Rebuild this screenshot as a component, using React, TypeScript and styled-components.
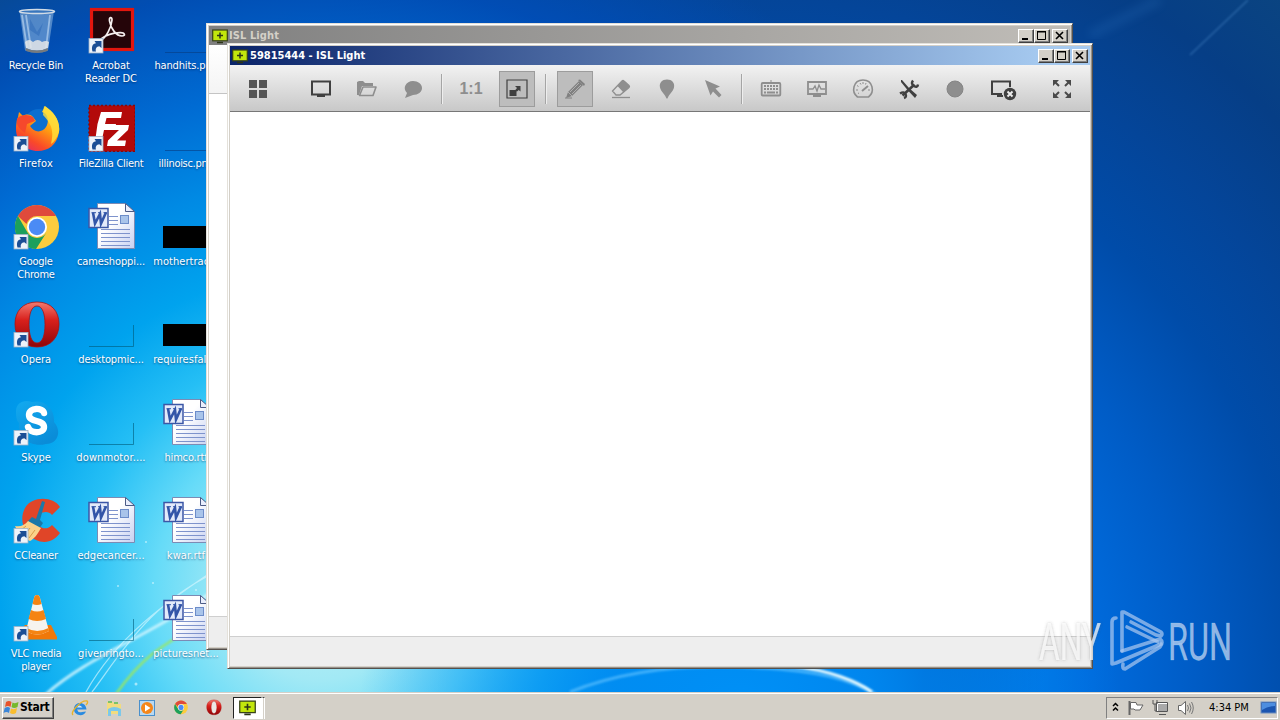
import React from 'react';
import styled, { createGlobalStyle, css } from 'styled-components';

const Global = createGlobalStyle`
  * { box-sizing: border-box; }
  body { margin: 0; overflow: hidden; }
`;

const Screen = styled.div`
  width: 1280px;
  height: 720px;
  display: flex;
  flex-direction: column;
  overflow: hidden;
  font-family: 'DejaVu Sans Condensed', 'DejaVu Sans', sans-serif;
  font-size: 11px;
  line-height: 13px;
`;

const Desktop = styled.main`
  position: relative;
  flex: 1;
  overflow: hidden;
  background:
    radial-gradient(ellipse 380px 240px at 740px 700px, #0090f6 0, rgba(0, 138, 242, 0.9) 35%, rgba(0, 120, 232, 0) 100%),
    radial-gradient(circle at 320px 590px, #c4f2f6 0, #a2e9f5 90px, #66dbf8 165px, #25bff5 240px, #00a3ee 320px, #008ae4 410px, #006bd3 500px, rgba(0, 78, 184, 0.9) 610px, rgba(0, 74, 175, 0) 730px),
    radial-gradient(ellipse 600px 640px at 750px 690px, #0098f8 0, #0088f0 25%, #006cde 56%, #005cc6 74%, #004ca9 92%, #044599 108%, #063e86 125%, #0c467f 145%);
`;

const Streaks = styled.svg`
  position: absolute;
  inset: 0;
`;

const IconGrid = styled.div`
  position: relative;
  display: grid;
  grid-auto-flow: column;
  grid-template-rows: repeat(7, 98px);
  grid-auto-columns: 72px;
  column-gap: 3px;
  width: 222px;
`;

const Shortcut = styled.div`
  display: flex;
  flex-direction: column;
  align-items: center;
  padding-top: 6px;
  gap: 5px;
`;

const Label = styled.span<{ $spacing?: number }>`
  color: #fff;
  text-align: center;
  white-space: pre;
  letter-spacing: ${p => p.$spacing ?? -0.25}px;
  text-shadow: 0 1px 2px rgba(0, 30, 80, 0.6);
`;

const raised = css`
  border: 1px solid;
  border-color: #fff #404040 #404040 #fff;
  box-shadow: inset -1px -1px #808080;
`;

const Frame = styled.section<{ $x: number; $y: number; $w: number; $h: number }>`
  position: absolute;
  left: ${p => p.$x}px;
  top: ${p => p.$y}px;
  width: ${p => p.$w}px;
  height: ${p => p.$h}px;
  display: flex;
  flex-direction: column;
  padding: 2px;
  background: #d4d0c8;
  border: 1px solid;
  border-color: #e4e1da #55504c #55504c #e4e1da;
  box-shadow: inset 1px 1px #fff, inset -1px -1px #96918b;
`;

const TitleBar = styled.header<{ $active?: boolean }>`
  height: 19px;
  flex: none;
  display: flex;
  align-items: center;
  padding: 0 2px 0 ${p => (p.$active ? 2 : 3)}px;
  gap: ${p => (p.$active ? 2 : 1)}px;
  font-weight: bold;
  color: ${p => (p.$active ? '#fff' : '#d4d0c8')};
  background: ${p =>
    p.$active ? 'linear-gradient(90deg, #0a246a, #a6caf0 95%)' : 'linear-gradient(90deg, #808080, #c0bdb8)'};
`;

const TitleText = styled.span<{ $spacing: number }>`
  flex: 1;
  white-space: pre;
  letter-spacing: ${p => p.$spacing}px;
`;

const Controls = styled.div`
  display: flex;
  & > :last-child { margin-left: 2px; }
`;

const ControlButton = styled.span`
  width: 16px;
  height: 14px;
  background: #d4d0c8;
  ${raised}
  svg { display: block; }
`;

const Toolbar = styled.div`
  height: 47px;
  flex: none;
  display: flex;
  align-items: center;
  gap: 10px;
  padding: 1px 10px 0;
  background: linear-gradient(#f2f2f2, #c8c8c8);
  border-bottom: 1px solid #777;
`;

const ToolButton = styled.span<{ $pressed?: boolean; $before?: number }>`
  width: 36px;
  height: 36px;
  flex: none;
  display: flex;
  align-items: center;
  justify-content: center;
  margin-left: ${p => p.$before ?? 0}px;
  border: 1px solid ${p => (p.$pressed ? '#9c9c9c' : 'transparent')};
  background: ${p => (p.$pressed ? '#bdbdbd' : 'none')};
  color: #8e8e8e;
  font: bold 16px 'Liberation Sans', sans-serif;
`;

const Separator = styled.i`
  width: 2px;
  height: 30px;
  flex: none;
  border-left: 1px solid #a5a5a5;
  border-right: 1px solid #eee;
`;

const Fill = styled.span`
  flex: 1;
`;

const Body = styled.div`
  flex: 1;
  background: #fff;
`;

const BackHead = styled.div`
  height: 49px;
  flex: none;
  background: linear-gradient(#fff, #f4f4f4);
  border-bottom: 1px solid #c4c4c4;
`;

const Status = styled.footer<{ $tall?: boolean }>`
  height: ${p => (p.$tall ? 31 : 30)}px;
  flex: none;
  background: #eee;
  border-top: 1px solid #cfcfcf;
`;

const Watermark = styled.svg`
  position: absolute;
  left: 1030px;
  top: 600px;
`;

const Taskbar = styled.nav`
  height: 28px;
  flex: none;
  display: flex;
  align-items: center;
  padding: 2px 2px 0;
  background: #d4d0c8;
  border-top: 1px solid #d4d0c8;
  box-shadow: inset 0 1px #fff;
  color: #000;
`;

const StartButton = styled.span`
  width: 52px;
  height: 22px;
  display: flex;
  align-items: center;
  padding-left: 0;
  font-weight: bold;
  font-size: 12px;
  letter-spacing: -0.25px;
  ${raised}
`;

const QuickLaunch = styled.div`
  display: flex;
  gap: 15.6px;
  margin-left: 17px;
`;

const TaskButton = styled.span`
  width: 29px;
  height: 22px;
  display: flex;
  align-items: center;
  justify-content: center;
  margin-left: 10px;
  background: #fff;
  border: 1px solid;
  border-color: #222 #fff #fff #222;
`;

const TaskEdge = styled.i`
  width: 3px;
  height: 22px;
  border-top: 1px solid #404040;
  border-left: 1px solid #fff;
  border-right: 1px solid #fff;
`;

const Tray = styled.div`
  width: 172px;
  height: 22px;
  margin-left: auto;
  display: flex;
  align-items: center;
  padding: 0 0 0 5px;
  gap: 8px;
  border: 1px solid;
  border-color: #808080 #fff #fff #808080;
`;

const Clock = styled.span`
  margin-left: 6px;
  flex: 1;
  white-space: pre;
  letter-spacing: 0;
`;

/* ---- Desktop icons ---- */

const Arrow = () => (
  <g>
    <rect x="2" y="32.500" width="14" height="14.500" fill="#eef3fa" stroke="#9fb2c8" strokeWidth=".8" />
    <path d="M5.500 45.500C4 40.500 6 37.500 9 37.300L7.500 35H14.500V42L12.300 40.200C9.500 40.600 8.100 42.500 9 45.500Z" fill="#1c4e95" />
  </g>
);

const Art = ({ children }: { children?: React.ReactNode }) => (
  <svg width="48" height="48" viewBox="0 0 48 48">{children}</svg>
);

const RecycleBin = () => (
  <Art>
    <path d="M7.500 5L13 44.500Q25 49 36 44.500L42 5Z" fill="#9fc4e8" fillOpacity=".5" />
    <path d="M10 9L15 42M14 9L19 42M38 9L34 42" stroke="#dcefff" strokeWidth="1.800" opacity=".5" />
    <path d="M18 13L25 26L31 17L27 30L18 24Z" fill="#2b68b8" opacity=".5" />
    <path d="M13 36Q17 32 21 36Q26 32 30 36Q34 34 37 36L36 42Q25 47 14 42Z" fill="#e4e6e8" opacity=".85" />
    <path d="M13.500 42Q25 47 36 42L35.500 45Q25 49 14 45Z" fill="#777a7d" />
    <ellipse cx="25" cy="5.500" rx="17.500" ry="2" fill="#3876bd" stroke="#d2dce6" strokeWidth="1.500" />
  </Art>
);

const Acrobat = () => (
  <Art>
    <rect x="4.500" y="3.500" width="41" height="40" fill="#250509" stroke="#e2160e" strokeWidth="3.200" />
    <path d="M14 34C19 32 24.500 21 25 14C25 10.500 22 11 22.500 15C23.500 22 29 30 35 30C39 30 38 26.500 33 26.700C25 27 18 30 14 33C11.500 35.500 12.500 36.500 14 34" fill="none" stroke="#f5eeee" strokeWidth="1.700" />
    <Arrow />
  </Art>
);

const Firefox = () => (
  <Art>
    <defs>
      <linearGradient id="fxBody" x1=".9" y1="0" x2=".3" y2="1">
        <stop offset="0" stopColor="#fff04a" />
        <stop offset=".45" stopColor="#ffa010" />
        <stop offset=".8" stopColor="#fa4a28" />
        <stop offset="1" stopColor="#e8305c" />
      </linearGradient>
    </defs>
    <circle cx="27" cy="20" r="15" fill="#0b6fd0" />
    <path d="M33 2C42 8 48.500 17 47 28C45 41 36 47 26 47C13 47 4 37 4 25C4 20 5 15 6 13L7 8L11 12C14 10 18 10 21 13L24 17L18 22C22 29 30 29 34 23C38 16 35 9 30 8Z" fill="url(#fxBody)" />
    <path d="M5 15C8 10 17 10 21 13L23 17L15 20L13 29C6 24 4 20 5 15Z" fill="#f6482c" />
    <path d="M32 2C42 8 48.500 17 47 28C45 34 42 38 39 40C41 30 42 22 31 11Z" fill="#ffe03c" opacity=".8" />
    <Arrow />
  </Art>
);

const FileZilla = () => (
  <Art>
    <rect x="2" y="1.500" width="46" height="46" fill="#b30a0a" stroke="#8b0606" strokeWidth="1.500" strokeDasharray="2 2" />
    <path d="M14 8H35L34 14H19.500L18 20H29L28 26H17L14.500 38H8L10.500 20Z" fill="#fff" />
    <path d="M26 21H42L41 26L30 36.500H39L38 42H20L21 36.500L32 26H25Z" fill="#fff" />
    <Arrow />
  </Art>
);

const ChromeMark = () => (
  <g>
    <circle cx="25" cy="24" r="22" fill="#fccc3e" />
    <path d="M5.900 13A22 22 0 0 1 44 13H25A11 11 0 0 0 14.500 21Z" fill="#df4a3c" />
    <path d="M5.900 13A22 22 0 0 0 24 46L34.500 29.500A11 11 0 0 1 15.500 29.500Z" fill="#1ca05c" />
    <circle cx="25" cy="24" r="10" fill="#fff" />
    <circle cx="25" cy="24" r="8.200" fill="#4b8bf5" />
  </g>
);

const Chrome = () => <Art><g transform="translate(0 1)"><ChromeMark /></g><Arrow /></Art>;

const OperaMark = () => (
  <g>
    <defs>
      <linearGradient id="opRed" x1="0" y1="0" x2="0" y2="1">
        <stop offset="0" stopColor="#f27b70" />
        <stop offset=".4" stopColor="#d9201c" />
        <stop offset="1" stopColor="#8e0508" />
      </linearGradient>
    </defs>
    <path fillRule="evenodd" d="M25 2C39 2 47 11 47 24S39 47 25 47S3 37 3 24S11 2 25 2ZM25 6C19.500 6 17 14 17 24.500S19.500 43 25 43S33 35 33 24.500S30.500 6 25 6Z" fill="url(#opRed)" stroke="#a91212" strokeWidth=".8" />
  </g>
);

const Opera = () => <Art><OperaMark /><Arrow /></Art>;

const Skype = () => (
  <Art>
    <defs>
      <linearGradient id="skBlue" x1="0" y1="0" x2=".6" y2="1">
        <stop offset="0" stopColor="#12aaf0" />
        <stop offset="1" stopColor="#0a8cd8" />
      </linearGradient>
    </defs>
    <path d="M4 13C4 4 13 1 20 4C33 1 43 11 42 24C50 33 46 46 34 46C18 50 5 39 7 25C4 22 4 17 4 13Z" fill="url(#skBlue)" />
    <path d="M32 15C31 9.500 17 9 17 17C17 25 32 21 32 29C32 36 18 36 16 29" fill="none" stroke="#fff" strokeWidth="6.400" strokeLinecap="round" />
    <Arrow />
  </Art>
);

const CCleaner = () => (
  <Art>
    <path d="M48 11C41 0 20 0 13 12C6 25 13 42 28 45.500C37 47 43 44 48 37L40 29C34 36 25 31 25 24S35 13 40 19Z" fill="#e04528" />
    <path d="M30 5L33 6L28 24L31 27L27 33L15 26L20 21L24 23Z" fill="#1b78a8" />
    <path d="M16 25L29 32C25 39 22 43 18 45C12 43 6 37 3 30C9 31 13 29 16 25Z" fill="#fbd28a" />
    <path d="M14 30L8 35M18 32L12 40M23 34L17 42" stroke="#d89c48" />
    <Arrow />
  </Art>
);

const Vlc = () => (
  <Art>
    <path d="M9 35L13 31H39L45 43V45.500H7Z" fill="#f07808" />
    <path d="M25 1C27 1 27.500 2 28 4L37 37Q25 44 14 37L22 4C22.500 2 23 1 25 1Z" fill="#f6f3ee" />
    <path d="M25 1C27 1 27.500 2 28 4L29.500 10Q25 12 20.500 10L22 4C22.500 2 23 1 25 1ZM19 16Q25 19 31.500 16L34 25Q25 29 16.500 25ZM14.500 34Q25 40 36.500 34L37 37Q25 44 14 37Z" fill="#f58413" />
    <Arrow />
  </Art>
);

const WordDoc = () => (
  <Art>
    <defs>
      <linearGradient id="page" x1="0" y1="0" x2="1" y2="1">
        <stop offset=".4" stopColor="#fff" />
        <stop offset="1" stopColor="#c6d0f1" />
      </linearGradient>
    </defs>
    <g transform="translate(1 2)">
      <path d="M9.500 -.5H37.500L46.500 8V44.500H9.500Z" fill="url(#page)" stroke="#7c8bb4" />
      <path d="M37.500 -.5V7.500H46.500Z" fill="#e9eefc" stroke="#4c5b86" />
      <path d="M21 12.500H30M21 16.500H30M21 20.500H30M13 25.500H42M13 29.500H42M13 33.500H42M13 37.500H42M13 41.500H42" stroke="#7e93cc" />
      <rect x="32.500" y="11.500" width="8" height="8" fill="#a9c4ea" stroke="#6c8cc9" />
      <rect x="1" y="4.500" width="19" height="19" fill="#e3eafa" stroke="#3c57a6" strokeWidth="1.500" />
      <path d="M5 8.500L7 19.500L12 10L13 19.500L18 8.500" fill="none" stroke="#3355a8" strokeWidth="2.600" />
      <path d="M3.500 8.700H8M10 8.700H13M15.500 8.700H19" stroke="#3355a8" />
    </g>
  </Art>
);

const Blank = () => (
  <Art>
    <path d="M2 46.500H46.500V25" fill="none" stroke="#005a78" strokeOpacity=".6" />
  </Art>
);

const Line = () => (
  <Art>
    <path d="M3 46.500H48" fill="none" stroke="#063c80" strokeOpacity=".6" />
  </Art>
);

const BlackImage = () => (
  <Art>
    <rect x="1" y="24" width="47" height="22" fill="#000" />
  </Art>
);

type Item = { name: string; icon: () => React.ReactElement; spacing?: number };

const items: Item[] = [
  { name: 'Recycle Bin', icon: RecycleBin, spacing: -0.25 },
  { name: 'Firefox', icon: Firefox, spacing: 0.2 },
  { name: 'Google\nChrome', icon: Chrome, spacing: -0.25 },
  { name: 'Opera', icon: Opera, spacing: 0 },
  { name: 'Skype', icon: Skype, spacing: -0.1 },
  { name: 'CCleaner', icon: CCleaner, spacing: -0.2 },
  { name: 'VLC media\nplayer', icon: Vlc, spacing: -0.3 },
  { name: 'Acrobat\nReader DC', icon: Acrobat, spacing: -0.1 },
  { name: 'FileZilla Client', icon: FileZilla, spacing: -0.3 },
  { name: 'cameshoppi...', icon: WordDoc, spacing: -0.1 },
  { name: 'desktopmic...', icon: Blank, spacing: -0.1 },
  { name: 'downmotor....', icon: Blank, spacing: 0.1 },
  { name: 'edgecancer...', icon: WordDoc, spacing: 0.05 },
  { name: 'givenringto...', icon: Blank, spacing: 0 },
  { name: 'handhits.png', icon: Line, spacing: -0.15 },
  { name: 'illinoisc.png', icon: Line, spacing: -0.3 },
  { name: 'mothertrac...', icon: BlackImage, spacing: 0.05 },
  { name: 'requiresfall...', icon: BlackImage, spacing: 0.05 },
  { name: 'himco.rtf', icon: WordDoc, spacing: -0.15 },
  { name: 'kwar.rtf', icon: WordDoc, spacing: 0.1 },
  { name: 'picturesnet...', icon: WordDoc, spacing: 0 },
];

/* ---- Window parts ---- */

const IslIcon = ({ size = 16 }: { size?: number }) => (
  <svg width={size} height={size} viewBox="0 0 16 16">
    <rect x=".7" y="2" width="14.600" height="10.800" fill="#c2e60c" stroke="#38421a" strokeWidth="1.200" />
    <path d="M5 14.500H11M8 4.500V10.500M5 7.500H11" stroke="#2c3517" strokeWidth="1.500" />
  </svg>
);

const WindowControls = () => (
  <Controls>
    <ControlButton><svg width="14" height="12"><path d="M3 9H9" stroke="#000" strokeWidth="2" /></svg></ControlButton>
    <ControlButton><svg width="14" height="12"><path d="M2.500 1V9.500H10.500V1M2 2H11" fill="none" stroke="#000" /><path d="M2 1.500H11" stroke="#000" /></svg></ControlButton>
    <ControlButton><svg width="14" height="12"><path d="M3 2L10 9M10 2L3 9" stroke="#000" strokeWidth="1.600" /></svg></ControlButton>
  </Controls>
);

const Glyph = ({ children, w = 24 }: { children: React.ReactNode; w?: number }) => (
  <svg width={w} height="24" viewBox={`0 0 ${w} 24`} fill="none">{children}</svg>
);

const dark = '#404040';
const gray = '#8e8e8e';

const GridGlyph = () => <Glyph><path d="M3 3H11V11H3ZM13 3H21V11H13ZM3 13H11V21H3ZM13 13H21V21H13Z" fill="#555" /></Glyph>;
const MonitorGlyph = () => <Glyph><path d="M3 4.500H21V17.500H3Z" stroke={dark} strokeWidth="2" /><path d="M8 18H16V20H8Z" fill={dark} /></Glyph>;
const FolderGlyph = () => <Glyph><path d="M2 18V5L4 4H8L10 6H18V9H7L4 18Z" fill={gray} /><path d="M8 10H21L18 18.500H4.500Z" stroke={gray} strokeWidth="1.600" strokeLinejoin="round" /></Glyph>;
const ChatGlyph = () => <Glyph><path d="M12 4C17 4 21 7 21 11S17 18 12 18L4 21L6 16C1 11 5 4 12 4Z" fill={gray} /></Glyph>;
const FitGlyph = () => <Glyph><path d="M2 3H22V21H2Z" stroke={dark} strokeWidth="1.200" /><path d="M4.500 13H11.500V19H4.500ZM10 9H15.500V14.500L13.800 13L12 14.500L10.300 13L12 11Z" fill={dark} /></Glyph>;
const PencilGlyph = () => <Glyph><path d="M3 21L5 15L16 4L20 8L9 19Z" fill="#808080" /><path d="M15 3L17 2.500L22 7L21 9Z" fill="#808080" /><path d="M7 15L16 6M9 17L18 8M5 15L9 19" stroke="#bdbdbd" strokeWidth=".8" /><path d="M2 21H9" stroke="#808080" /></Glyph>;
const EraserGlyph = () => <Glyph><path d="M3.500 14L13 4Q14 3 15 4L20 8.500Q21 9.500 20 10.500L11 18H7Z" stroke={gray} strokeWidth="1.300" /><path d="M8.500 9L13 4Q14 3 15 4L20 8.500Q21 9.500 20 10.500L14.500 15.500Z" fill={gray} /><path d="M3 20.500H21" stroke={gray} strokeWidth="1.300" /></Glyph>;
const PinGlyph = () => <Glyph><path d="M12 2.500C17 2.500 20 6 19 10.500C18 15 14 17 12.500 21.500H11.500C10 17 6 15 5 10.500C4 6 7 2.500 12 2.500Z" fill={gray} /></Glyph>;
const CursorGlyph = () => <Glyph><path d="M4 3L19 9.500L14.500 11.500L20.500 18L18 20.500L12 14.500L9.500 18.500Z" fill={gray} /></Glyph>;
const KeyboardGlyph = () => <Glyph><rect x="2.700" y="6" width="18.600" height="12.500" rx="1" stroke={gray} strokeWidth="1.800" /><path d="M12 3V6" stroke={gray} /><path d="M5 9H19M5 12H19" stroke={gray} strokeWidth="2" strokeDasharray="2 1" /><path d="M5 15.500H7M8 15.500H16M17 15.500H19" stroke={gray} strokeWidth="2" /></Glyph>;
const PulseGlyph = () => <Glyph><path d="M3 5H21V17H3Z" stroke={gray} strokeWidth="1.800" /><path d="M8 18H16V20H8Z" fill={gray} /><path d="M4 12H8L10 9L12 14L14 8L16 12H20" stroke={gray} strokeWidth="1.300" /></Glyph>;
const GaugeGlyph = () => <Glyph><path d="M6.500 20C0 15 2 3 12 3S24 15 17.500 20Z" stroke={gray} strokeWidth="1.600" /><path d="M11 14L17 9" stroke={gray} strokeWidth="2" /><path d="M5 13H7M6 8.500L7.500 9.500M9 6L10 7.500M12 5V7M15 6L14.500 7.500M17 13H19M7 16.500L8 16" stroke={gray} /></Glyph>;
const ToolsGlyph = () => <Glyph><path d="M4 3L5 3L12 11L20 18L18 21L10.500 13L4 5Z" fill={dark} /><path d="M5.500 18.500L17.500 7.500" stroke={dark} strokeWidth="2.600" /><path d="M16 3.500Q13.500 7 17 9T21 7.500M3 16.500Q7 14 8.500 17T7 21" stroke={dark} strokeWidth="2.400" /></Glyph>;
const RecordGlyph = () => <Glyph><circle cx="12" cy="12" r="8" fill={gray} stroke="#858585" /></Glyph>;
const EndGlyph = () => <Glyph w={28}><path d="M13 17H3V4.500H21V10" stroke={dark} strokeWidth="2" /><path d="M8 18H14V20H8Z" fill={dark} /><circle cx="21" cy="17" r="6.200" fill={dark} /><path d="M18.500 14.500L23.500 19.500M23.500 14.500L18.500 19.500" stroke="#eee" strokeWidth="1.900" /></Glyph>;
const ExpandGlyph = () => (
  <Glyph>
    <path d="M3 3H9L3 9ZM21 3V9L15 3ZM3 21V15L9 21ZM21 21H15L21 15Z" fill="#4a4a4a" />
    <path d="M5 5L9 9M19 5L15 9M5 19L9 15M19 19L15 15" stroke="#4a4a4a" strokeWidth="2" />
  </Glyph>
);

/* ---- Taskbar icons ---- */

const Flag = () => (
  <svg width="17" height="17" viewBox="0 0 17 17">
    <path d="M3 3Q6 1 8.500 3L7.500 8Q5 6 2 8Z" fill="#e8532a" />
    <path d="M9.500 3.500Q12 5 15.500 3L14.500 8Q11 10 8.500 8Z" fill="#76b82c" />
    <path d="M1.700 9Q5 7 7 9L6 14Q3.500 12 .5 14Z" fill="#3b86d8" />
    <path d="M8 9.500Q11 11 14 9L13 14Q10 16 7 14Z" fill="#f9bd2d" />
  </svg>
);

const Quick = ({ children, box = '0 0 18 18' }: { children: React.ReactNode; box?: string }) => (
  <svg width="18" height="18" viewBox={box}>{children}</svg>
);

export default function App() {
  return (
    <Screen>
      <Global />
      <Desktop>
        <Streaks width="1280" height="692" fill="none">
          <defs>
            <filter id="soft"><feGaussianBlur stdDeviation="1" /></filter>
            <filter id="wide"><feGaussianBlur stdDeviation="5" /></filter>
          </defs>
          <path d="M45 695C95 650 170 630 240 570" stroke="#d8f8ff" strokeWidth="3" opacity=".8" filter="url(#soft)" />
          <path d="M86 692C115 640 160 605 230 560M92 692C120 655 150 600 225 568" stroke="#d8f8ff" strokeWidth="1.300" opacity=".65" />
          <path d="M116 694C140 660 160 645 200 625" stroke="#9be860" strokeWidth="2.400" opacity=".9" filter="url(#soft)" />
          <path d="M570 692C630 668 700 664 760 668C820 671 850 680 876 694" stroke="#5cc0ff" strokeWidth="3" opacity=".7" filter="url(#soft)" />
          <path d="M790 666C830 670 858 682 872 692" stroke="#e8fbff" strokeWidth="3" filter="url(#soft)" />
          <path d="M1090 35L1160 0" stroke="#3a86d0" strokeWidth="8" opacity=".2" filter="url(#wide)" />
          <path d="M1190 55L1248 0" stroke="#5a9ad8" strokeWidth="1.600" opacity=".4" filter="url(#soft)" />
          <g fill="#e8fcff" opacity=".6">
            <circle cx="118" cy="586" r="1" /><circle cx="153" cy="583" r="1" /><circle cx="136" cy="684" r="1.500" /><circle cx="196" cy="590" r="1" /><circle cx="146" cy="542" r="1" />
          </g>
        </Streaks>
        <IconGrid>
          {items.map(({ name, icon: Icon, spacing }) => (
            <Shortcut key={name}>
              <Icon />
              <Label $spacing={spacing}>{name}</Label>
            </Shortcut>
          ))}
        </IconGrid>

        <Frame $x={206} $y={23} $w={867} $h={627}>
          <TitleBar>
            <IslIcon />
            <TitleText $spacing={0.1}>ISL Light</TitleText>
            <WindowControls />
          </TitleBar>
          <BackHead />
          <Body />
          <Status $tall />
        </Frame>

        <Frame $x={227} $y={43} $w={866} $h={626}>
          <TitleBar $active>
            <IslIcon />
            <TitleText $spacing={0}>59815444 - ISL Light</TitleText>
            <WindowControls />
          </TitleBar>
          <Toolbar>
            <ToolButton><GridGlyph /></ToolButton>
            <ToolButton $before={17}><MonitorGlyph /></ToolButton>
            <ToolButton><FolderGlyph /></ToolButton>
            <ToolButton><ChatGlyph /></ToolButton>
            <Separator />
            <ToolButton>1:1</ToolButton>
            <ToolButton $pressed><FitGlyph /></ToolButton>
            <Separator />
            <ToolButton $pressed><PencilGlyph /></ToolButton>
            <ToolButton><EraserGlyph /></ToolButton>
            <ToolButton><PinGlyph /></ToolButton>
            <ToolButton><CursorGlyph /></ToolButton>
            <Separator />
            <ToolButton><KeyboardGlyph /></ToolButton>
            <ToolButton><PulseGlyph /></ToolButton>
            <ToolButton><GaugeGlyph /></ToolButton>
            <ToolButton><ToolsGlyph /></ToolButton>
            <ToolButton><RecordGlyph /></ToolButton>
            <ToolButton $before={2}><EndGlyph /></ToolButton>
            <Fill />
            <ToolButton><ExpandGlyph /></ToolButton>
          </Toolbar>
          <Body />
          <Status />
        </Frame>

        <Watermark width="230" height="80" fill="none">
          <defs>
            <filter id="halo" x="-10%" y="-20%" width="120%" height="140%">
              <feDropShadow dx="0" dy="0" stdDeviation="1.500" floodColor="#555" floodOpacity=".5" />
            </filter>
          </defs>
          <g filter="url(#halo)">
            <text x="9" y="60" textLength="62" lengthAdjust="spacingAndGlyphs" fontFamily="Roboto, sans-serif" fontSize="52" fill="#fff" fillOpacity=".7">ANY</text>
          </g>
          <text x="138" y="60" textLength="64" lengthAdjust="spacingAndGlyphs" fontFamily="Roboto, sans-serif" fontSize="52" fill="#d0e0f6" fillOpacity=".7" stroke="#d0e0f6" strokeOpacity=".4" strokeWidth=".5">RUN</text>
          <g stroke="#a8c6ee" strokeOpacity=".72" strokeWidth="3.600" strokeLinejoin="round" strokeLinecap="round">
            <path d="M86 18Q82 18 82 22V64L86 63L131 44" />
            <path d="M97 27L128 42M92 51V12H94L131 32Q133 34 131 36L126 35L101 22" />
            <path d="M92 51L130 39Q134 42 130 47L95 69Q92 69 93 64" />
          </g>
        </Watermark>
      </Desktop>

      <Taskbar>
        <StartButton><Flag />Start</StartButton>
        <QuickLaunch>
          <Quick>
            <path d="M14.500 10.500H6Q7 14 11 13L15 12.500C13 18.500 2 17 3 9C4 2 15 2 15.500 10.500Z" fill="#2a8be0" />
            <path d="M6 8.500Q8 4.500 11.500 8.500Z" fill="#d4e8f8" />
            <path d="M2 16C-1 13 10 1 16 2C17 3 16 5 15 6" fill="none" stroke="#e8b32a" strokeWidth="1.400" />
          </Quick>
          <Quick>
            <path d="M2 3H8L9 5H16V15H2Z" fill="#f3dc7e" />
            <path d="M3 2H7V4H3ZM9 3H13V5H9Z" fill="#7cc36a" />
            <path d="M3 17V10Q9 6 16 10V17H13V12H6V17Z" fill="#7cc8ea" />
          </Quick>
          <Quick>
            <rect x="1.500" y="1.500" width="15" height="15" fill="#b9d9f2" stroke="#4a90cc" />
            <circle cx="9" cy="9" r="6" fill="#f5861a" />
            <path d="M7 5.500V12.500L12.500 9Z" fill="#fff" />
          </Quick>
          <Quick box="-4 -2 58 56"><ChromeMark /></Quick>
          <Quick box="-2 0 54 53"><OperaMark /><ellipse cx="25" cy="24.500" rx="7" ry="17" fill="#ece8e4" /></Quick>
        </QuickLaunch>
        <TaskButton><IslIcon size={17} /></TaskButton>
        <TaskEdge />
        <Tray>
          <svg width="7" height="12" fill="none"><path d="M1 4L3.500 1.500L6 4M1 8.500L3.500 6L6 8.500" stroke="#000" strokeWidth="1.500" /></svg>
          <svg width="17" height="16" fill="none"><path d="M2.500 1V15" stroke="#666" strokeWidth="2" /><path d="M3.500 2.500H9L10 5H16L13 10H8L7 9H3.500Z" fill="#fff" stroke="#666" /></svg>
          <svg width="17" height="17" fill="none"><rect x="5.500" y="4.500" width="10" height="8" fill="#a9a9a9" stroke="#fff" /><path d="M4.500 3.500H15.500V12.500H4.500ZM7 15.500H14" stroke="#555" /><path d="M1 1V5H5V1M3 5V12H5" stroke="#555" /></svg>
          <svg width="18" height="16" fill="none"><path d="M1.500 5.500H4L8.500 1.500V14.500L4 10.500H1.500Z" fill="#fff" stroke="#666" /><path d="M10.500 5Q12.500 8 10.500 11M12.500 3.500Q15.500 8 12.500 12.500M14.500 2Q18 8 14.500 14" stroke="#777" /></svg>
          <Clock>4:34 PM</Clock>
          <svg width="17" height="14"><rect x="1" y="1" width="15" height="11" fill="#1b55b0" stroke="#6d8fc0" /><path d="M2 2H15V5Q8 5 2 9Z" fill="#4d8ee0" /></svg>
        </Tray>
      </Taskbar>
    </Screen>
  );
}
